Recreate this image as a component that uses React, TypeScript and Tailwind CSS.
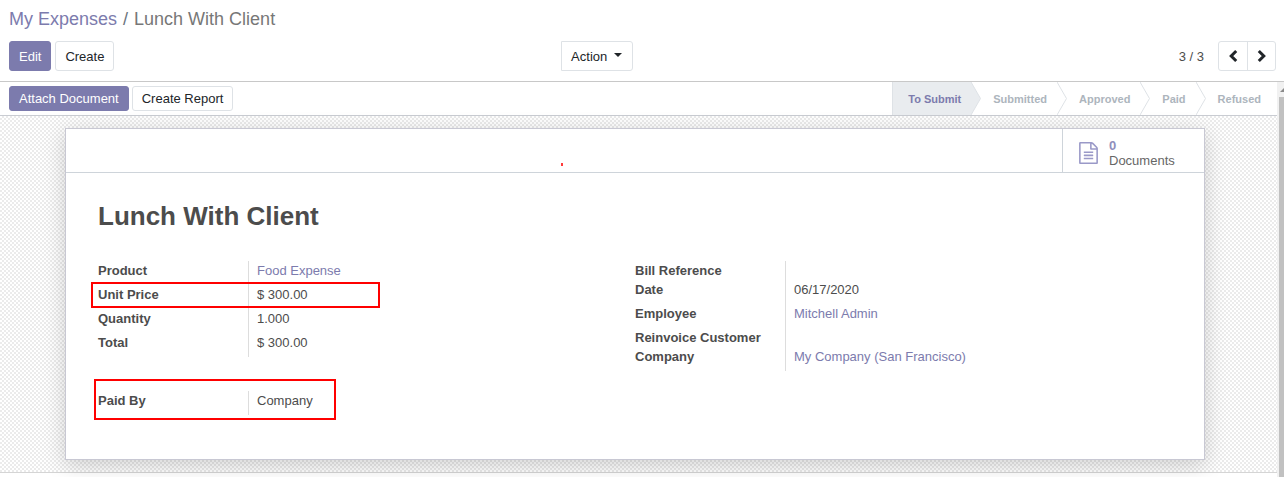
import type { ReactNode } from 'react';
import clsx from 'clsx';

type Field = {
  label: string;
  value?: string;
  link?: boolean;
  highlight?: string;
};

const STEPS = ['To Submit', 'Submitted', 'Approved', 'Paid', 'Refused'];
const CURRENT_STEP = 'To Submit';

const PRICE_FIELDS: Field[] = [
  { label: 'Product', value: 'Food Expense', link: true },
  {
    label: 'Unit Price',
    value: '$ 300.00',
    highlight: '-left-[7px] -top-[3px] h-[26px] w-[289px]',
  },
  { label: 'Quantity', value: '1.000' },
  { label: 'Total', value: '$ 300.00' },
];

const REFERENCE_FIELDS: Field[] = [
  { label: 'Bill Reference' },
  { label: 'Date', value: '06/17/2020' },
  { label: 'Employee', value: 'Mitchell Admin', link: true },
  { label: 'Reinvoice Customer' },
  { label: 'Company', value: 'My Company (San Francisco)', link: true },
];

const PAYMENT_FIELDS: Field[] = [
  {
    label: 'Paid By',
    value: 'Company',
    highlight: '-left-1 -top-3 h-[41px] w-[242px]',
  },
];

function Button({
  children,
  primary,
  small,
}: {
  children: ReactNode;
  primary?: boolean;
  small?: boolean;
}) {
  return (
    <button
      type="button"
      className={clsx(
        'rounded-[3px] border px-[9px] whitespace-nowrap',
        small ? 'h-[25px]' : 'h-[30px] pt-[2px]',
        primary
          ? 'border-[#7c7bad] bg-[#7c7bad] text-white'
          : 'border-[#dee2e6] bg-white text-[#212529]'
      )}
    >
      {children}
    </button>
  );
}

function Chevron({ direction }: { direction: 'left' | 'right' }) {
  return (
    <svg
      viewBox="0 0 10 14"
      className="h-[14px] w-[10px]"
      fill="none"
      stroke="currentColor"
      strokeWidth="3"
      aria-hidden="true"
    >
      <path d={direction === 'left' ? 'M8.2 2 3.2 7l5 5' : 'M1.8 2l5 5-5 5'} />
    </svg>
  );
}

function FileIcon() {
  return (
    <svg
      viewBox="0 0 1536 1792"
      className="h-[22px] w-[19px]"
      fill="currentColor"
      aria-hidden="true"
    >
      <path d="M1468 380q28 28 48 76t20 88v1152q0 40-28 68t-68 28h-1344q-40 0-68-28t-28-68v-1600q0-40 28-68t68-28h896q40 0 88 20t76 48zm-444-244v376h376q-10-29-22-41l-313-313q-12-12-41-22zm384 1528v-1024h-416q-40 0-68-28t-28-68v-416h-768v1536h1280zm-1024-864q0-14 9-23t23-9h704q14 0 23 9t9 23v64q0 14-9 23t-23 9h-704q-14 0-23-9t-9-23v-64zm736 224q14 0 23 9t9 23v64q0 14-9 23t-23 9h-704q-14 0-23-9t-9-23v-64q0-14 9-23t23-9h704zm0 256q14 0 23 9t9 23v64q0 14-9 23t-23 9h-704q-14 0-23-9t-9-23v-64q0-14 9-23t23-9h704z" />
    </svg>
  );
}

function StatusStep({
  label,
  active,
  last,
}: {
  label: string;
  active: boolean;
  last: boolean;
}) {
  return (
    <li
      aria-current={active ? 'step' : undefined}
      className={clsx(
        'relative flex items-center px-4 pt-px text-[11px] font-bold',
        active
          ? 'bg-[#e9ecef] text-[#7c7bad] shadow-[inset_1px_0_#dee2e6]'
          : 'text-[#adb5bd]'
      )}
    >
      {label}
      {!last && (
        <svg
          viewBox="0 0 10 33"
          preserveAspectRatio="none"
          className="absolute top-0 -right-1 h-full w-[10px]"
          aria-hidden="true"
        >
          <rect width="10" height="33" fill="#fff" />
          <path
            d="M0 0 9.5 16.5 0 33"
            fill={active ? '#e9ecef' : '#fff'}
            stroke="#dee2e6"
          />
        </svg>
      )}
    </li>
  );
}

function FieldGroup({ fields }: { fields: Field[] }) {
  return (
    <dl className="leading-[19px]">
      {fields.map(({ label, value, link, highlight }) => (
        <div key={label} className="relative flex">
          <dt className="w-[150px] shrink-0 font-bold">{label}</dt>
          <dd className={clsx('border-l border-[#dddddd] pl-2', value && 'pb-[5px]')}>
            {link ? (
              <a href="#" className="text-[#7c7bad]">
                {value}
              </a>
            ) : (
              value
            )}
            {highlight && (
              <span
                className={clsx('absolute border-2 border-[#ff0000]', highlight)}
              />
            )}
          </dd>
        </div>
      ))}
    </dl>
  );
}

export default function App() {
  return (
    <div className="flex min-h-screen flex-col bg-white font-['Liberation_Sans',Arial,sans-serif] text-[13px] text-[#4c4c4c]">
      {/* Control panel */}
      <header className="border-b border-[#c8c8c8] pt-[5px] pb-[10px]">
        <nav className="flex gap-[6px] px-[9px] text-[18px] leading-7">
          <a href="#" className="text-[#7c7bad]">
            My Expenses
          </a>
          <span className="text-[#6c757d]">/</span>
          <span className="text-[#777777]">Lunch With Client</span>
        </nav>
        <div className="mt-2 flex items-center">
          <div className="flex w-[43%] gap-1 pl-[9px]">
            <Button primary>Edit</Button>
            <Button>Create</Button>
          </div>
          <div className="pl-[9px]">
            <button
              type="button"
              className="flex h-[30px] items-center gap-[7px] rounded-r-[3px] border border-[#dee2e6] pt-[2px] pr-[10px] pl-[9px] text-[#212529]"
            >
              Action
              <svg
                viewBox="0 0 8 8"
                className="h-2 w-2"
                fill="currentColor"
                aria-hidden="true"
              >
                <path d="M0 0h8L4 4z" />
              </svg>
            </button>
          </div>
          <div className="ml-auto flex items-center gap-[14px] pr-2">
            <span className="pt-[2px]">3 / 3</span>
            <div className="flex h-[30px] divide-x divide-[#dee2e6] rounded-[3px] border border-[#dee2e6] text-[#212529]">
              <button
                type="button"
                aria-label="Previous"
                className="flex w-[29px] items-center justify-center"
              >
                <Chevron direction="left" />
              </button>
              <button
                type="button"
                aria-label="Next"
                className="flex w-[27px] items-center justify-center"
              >
                <Chevron direction="right" />
              </button>
            </div>
          </div>
        </div>
      </header>

      <div className="flex flex-1">
        <main className="flex min-w-0 flex-1 flex-col">
          {/* Status bar */}
          <div className="flex justify-between border-b border-[#c9ccd2] pl-[9px]">
            <div className="flex gap-[3px] py-1">
              <Button primary small>
                Attach Document
              </Button>
              <Button small>Create Report</Button>
            </div>
            <ol className="flex">
              {STEPS.map((step, index) => (
                <StatusStep
                  key={step}
                  label={step}
                  active={step === CURRENT_STEP}
                  last={index === STEPS.length - 1}
                />
              ))}
            </ol>
          </div>

          {/* Sheet */}
          <div className="border-b border-[#d5d5d5] bg-[repeating-conic-gradient(#ebebeb_0_25%,#ffffff_0_50%)] bg-[length:4px_4px] pt-3 pr-[7px] pb-3">
            <section className="mx-auto max-w-[1140px] border border-[#c8c8d3] bg-white shadow-[0_5px_20px_0_rgba(0,0,0,0.18)]">
              <div className="relative flex justify-end border-b border-[#ced4da]">
                <span className="absolute top-[34px] left-[495px] h-[3px] w-[2px] bg-[#ff3b3b]" />
                <button
                  type="button"
                  className="flex h-[43px] w-[142px] items-center gap-[11px] border-l border-[#ced4da] pt-1 pl-4 text-left leading-[15px] text-[#666666]"
                >
                  <span className="text-[#9a99c8]">
                    <FileIcon />
                  </span>
                  <span>
                    <span className="block font-bold text-[#8f8fbc]">0</span>
                    <span className="block">Documents</span>
                  </span>
                </button>
              </div>

              <div className="px-8 pt-[27px] pb-11">
                <h1 className="text-[26px] leading-8 font-bold">
                  Lunch With Client
                </h1>
                <div className="mt-[29px] grid grid-cols-2 items-start gap-y-5">
                  <FieldGroup fields={PRICE_FIELDS} />
                  <FieldGroup fields={REFERENCE_FIELDS} />
                  <FieldGroup fields={PAYMENT_FIELDS} />
                </div>
              </div>
            </section>
          </div>
        </main>

        {/* Scrollbar */}
        <div className="flex w-[7px] flex-col bg-[#f1f1f1] pl-[2px]">
          <svg viewBox="0 0 5 15" className="h-[15px] w-[5px]" aria-hidden="true">
            <path d="M1 10 5 6v4z" fill="#8a8a8a" />
          </svg>
          <div className="flex-1 bg-[#c1c1c1]" />
        </div>
      </div>
    </div>
  );
}
